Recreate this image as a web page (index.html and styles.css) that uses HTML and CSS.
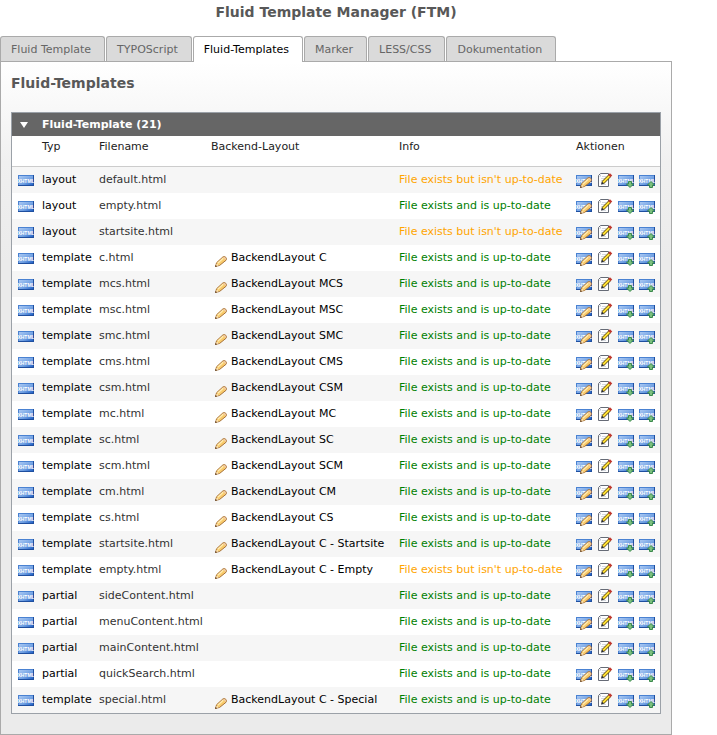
FILE: index.html
```html
<!DOCTYPE html>
<html lang="de">
<head>
<meta charset="utf-8">
<title>Fluid Template Manager (FTM)</title>
<link rel="stylesheet" href="styles.css">
</head>
<body>
<svg class="sprite" aria-hidden="true">
  <defs>
    <linearGradient id="blue" x1="0" y1="0" x2="1" y2="1">
      <stop offset="0" stop-color="#a9c8f3"/>
      <stop offset=".6" stop-color="#6f9fe2"/>
      <stop offset="1" stop-color="#1f5fc4"/>
    </linearGradient>
    <symbol id="xhtml" viewBox="0 0 16 16">
      <rect x="0" y="3" width="16" height="11" fill="#1f4f9f"/>
      <rect x="0" y="3" width="15" height="10" fill="#4a82d2"/>
      <rect x="1" y="4" width="14" height="9" fill="url(#blue)"/>
      <text x="8" y="10.500" class="badge-text">XHTML</text>
    </symbol>
    <symbol id="pencil" viewBox="0 0 16 16">
      <path d="M.7 15.300l.8-3.500 6.300-5.800q1.600-1 3 .3 1.200 1.400.2 3l-6.500 5.200z" fill="#f9cb6c" stroke="#a8733a"/>
      <path d="M2.800 12.200l5.400-5" stroke="#ffedb5" stroke-width="1.200" fill="none"/>
      <path d="M8 6.600l2.800 2.500.3-1.200-.8-1.400-1.300-.4z" fill="#efc9ae"/>
      <path d="M1.700 12.700l2 1.700-2.400.4z" fill="#fff0d0"/>
      <path d="M0 16l.5-2 1.500 1.500z" fill="#604020"/>
    </symbol>
    <symbol id="xhtml-edit" viewBox="0 0 16 16">
      <use href="#xhtml" width="16" height="16"/>
      <use href="#pencil" x="4" y="0" width="16" height="16"/>
    </symbol>
    <symbol id="page-edit" viewBox="0 0 16 16">
      <path d="M3.500 1.500h8v13h-10v-11z" fill="#fff" stroke="#666b76"/>
      <path d="M2 4.500h2v-2.500z" fill="#c5cad2"/>
      <path d="M5 4.500h4M4 6.500h4M4 8.500h2M4 12.500h5" stroke="#d5d9e0"/>
      <path d="M6 10.500l7-7" stroke="#59450f" stroke-width="3.400"/>
      <path d="M6 10.500l7-7" stroke="#ffe133" stroke-width="2"/>
      <path d="M12.300 4.200l1.800-1.800" stroke="#c0382e" stroke-width="3.200"/>
      <path d="M4 12.500l.8-3.200 2.400 2.400z" fill="#2a2a2a"/>
    </symbol>
    <symbol id="xhtml-down" viewBox="0 0 16 16">
      <use href="#xhtml" width="16" height="16"/>
      <path d="M10.500 9.500h3v2.500h2l-3.500 3.500-3.500-3.500h2z" fill="#7cc07f" stroke="#3c8a4c"/>
    </symbol>
    <symbol id="xhtml-up" viewBox="0 0 16 16">
      <use href="#xhtml" width="16" height="16"/>
      <path d="M10.500 15.500h3v-2.500h2l-3.500-3.500-3.500 3.500h2z" fill="#7cc07f" stroke="#3c8a4c"/>
    </symbol>
  </defs>
</svg>
<main class="module">
  <h1 class="title">Fluid Template Manager (FTM)</h1>
  <nav class="tabs">
    <a class="tab" href="#">Fluid Template</a>
    <a class="tab" href="#">TYPOScript</a>
    <a class="tab tab-active" href="#" aria-current="page">Fluid-Templates</a>
    <a class="tab" href="#">Marker</a>
    <a class="tab" href="#">LESS/CSS</a>
    <a class="tab" href="#">Dokumentation</a>
  </nav>
  <section class="panel">
    <h2 class="heading">Fluid-Templates</h2>
    <div class="list">
      <div class="list-bar">
        <button class="toggle" type="button" aria-label="Liste einklappen"><svg width="8" height="6" viewBox="0 0 8 6"><path d="M0 0h8l-4 6z" fill="#fff"/></svg></button>
        <span>Fluid-Template (21)</span>
      </div>
      <table class="files">
        <colgroup><col class="c-icon"><col class="c-type"><col class="c-name"><col class="c-backend"><col class="c-info"><col></colgroup>
        <thead>
          <tr><th></th><th>Typ</th><th>Filename</th><th>Backend-Layout</th><th>Info</th><th>Aktionen</th></tr>
        </thead>
        <tbody id="rows"></tbody>
      </table>
    </div>
  </section>
</main>
<script src="script.js"></script>
</body>
</html>
```
FILE: styles.css
```css
body {
  margin: 0;
  background: #fff;
  color: #000;
  font: 11px/14px "DejaVu Sans", Verdana, sans-serif;
}

.sprite {
  position: absolute;
  width: 0;
  height: 0;
}

.badge-text {
  fill: #fff;
  font: bold 5px "Liberation Sans Narrow", "Liberation Sans", sans-serif;
  text-anchor: middle;
}

.module {
  margin-right: 45px;
}

.title,
.heading {
  margin: 0;
  color: #585858;
  font-size: 14px;
  line-height: 18px;
}

.title {
  padding: 3px 0 15px;
  text-align: center;
}

.tabs {
  display: flex;
  gap: 1px;
  margin-bottom: -1px;
}

.tab {
  padding: 6px 13px 5px 10px;
  border: 1px solid #aaa;
  border-bottom: 0;
  border-radius: 3px 3px 0 0;
  background: #dadada;
  color: #666;
  text-decoration: none;
  white-space: nowrap;
  box-shadow: inset 0 -1px #aaa;
}

.tab-active {
  position: relative;
  background: #fff;
  color: #000;
  box-shadow: none;
}

.panel {
  padding: 12px 10px 20px;
  border: 1px solid #aaa;
  background: linear-gradient(#fff, #f0f0f0 100px, #ebebeb 200px);
}

.heading {
  padding-bottom: 20px;
}

.list {
  border: 1px solid #9ba1a8;
  background: #fff;
}

.list-bar {
  display: flex;
  align-items: center;
  height: 23px;
  background: #666;
  color: #fff;
  font-weight: bold;
}

.toggle {
  display: flex;
  width: 30px;
  padding: 0 0 0 8px;
  border: 0;
  background: none;
}

.files {
  width: 100%;
  border-collapse: separate;
  border-spacing: 0;
  table-layout: fixed;
}

.c-icon { width: 30px; }
.c-type { width: 57px; }
.c-name { width: 112px; }
.c-backend { width: 188px; }
.c-info { width: 177px; }

.files th {
  height: 26px;
  padding: 4px 0 0;
  border-bottom: 1px solid #ccc;
  color: #222;
  font-weight: normal;
  text-align: left;
  vertical-align: top;
}

.files td {
  height: 26px;
  padding: 0;
  white-space: nowrap;
}

.files tbody tr:nth-child(odd) {
  background: #f6f6f6;
}

.files .type-icon {
  padding-left: 6px;
}

.files .name {
  color: #333;
}

.current { color: #008000; }
.outdated { color: #ffa500; }

.icon {
  display: block;
  width: 16px;
  height: 16px;
}

.backend {
  display: flex;
  align-items: center;
  padding-left: 4px;
}

.backend .icon {
  margin-bottom: -1px;
}

.action {
  padding: 0;
  border: 0;
  background: none;
}

.actions {
  display: flex;
  gap: 5px;
}
```
FILE: script.js
```js
const files = [
  ["layout", "default.html", "", false],
  ["layout", "empty.html", "", true],
  ["layout", "startsite.html", "", false],
  ["template", "c.html", "BackendLayout C", true],
  ["template", "mcs.html", "BackendLayout MCS", true],
  ["template", "msc.html", "BackendLayout MSC", true],
  ["template", "smc.html", "BackendLayout SMC", true],
  ["template", "cms.html", "BackendLayout CMS", true],
  ["template", "csm.html", "BackendLayout CSM", true],
  ["template", "mc.html", "BackendLayout MC", true],
  ["template", "sc.html", "BackendLayout SC", true],
  ["template", "scm.html", "BackendLayout SCM", true],
  ["template", "cm.html", "BackendLayout CM", true],
  ["template", "cs.html", "BackendLayout CS", true],
  ["template", "startsite.html", "BackendLayout C - Startsite", true],
  ["template", "empty.html", "BackendLayout C - Empty", false],
  ["partial", "sideContent.html", "", true],
  ["partial", "menuContent.html", "", true],
  ["partial", "mainContent.html", "", true],
  ["partial", "quickSearch.html", "", true],
  ["template", "special.html", "BackendLayout C - Special", true]
];

const icon = (id) => `<svg class="icon" aria-hidden="true"><use href="#${id}"/></svg>`;
const action = (id, label) =>
  `<button class="action" type="button" aria-label="${label}">${icon(id)}</button>`;

document.getElementById("rows").innerHTML = files.map(([type, name, backend, current]) => `
  <tr>
    <td class="type-icon">${icon("xhtml")}</td>
    <td>${type}</td>
    <td class="name">${name}</td>
    <td>${backend ? `<div class="backend">${action("pencil", "Backend-Layout bearbeiten")}<span>${backend}</span></div>` : ""}</td>
    <td class="${current ? "current" : "outdated"}">${current ? "File exists and is up-to-date" : "File exists but isn't up-to-date"}</td>
    <td><div class="actions">
      ${action("xhtml-edit", "Bearbeiten")}
      ${action("page-edit", "Datei bearbeiten")}
      ${action("xhtml-down", "Herunterladen")}
      ${action("xhtml-up", "Hochladen")}
    </div></td>
  </tr>`).join("");
```
